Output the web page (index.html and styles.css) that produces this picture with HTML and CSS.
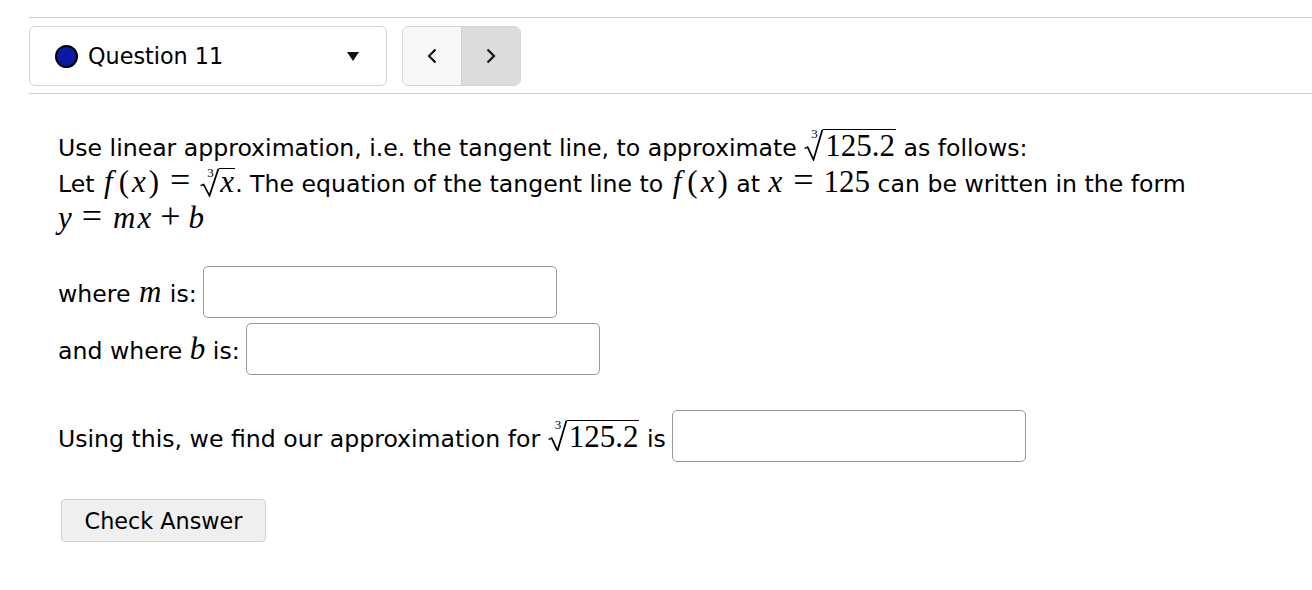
FILE: index.html
```html
<!DOCTYPE html>
<html>
<head>
<meta charset="utf-8">
<link rel="stylesheet" href="styles.css">
</head>
<body>
<div class="nav">
  <div class="qselect">
    <span class="dot"></span>
    <span class="qlabel">Question 11</span>
    <span class="caret"></span>
  </div>
  <div class="pager">
    <button class="pg prev"><svg width="12" height="18" viewBox="0 0 12 18"><path d="M9.5 2.5 L3 9 L9.5 15.5" fill="none" stroke="#111" stroke-width="2.2"/></svg></button>
    <button class="pg next"><svg width="12" height="18" viewBox="0 0 12 18"><path d="M2.5 2.5 L9 9 L2.5 15.5" fill="none" stroke="#111" stroke-width="2.2"/></svg></button>
  </div>
</div>

<div class="question">
  <p class="qtext">Use linear approximation, i.e. the tangent line, to approximate <span class="root big"><span class="idx">3</span><svg class="rad" viewBox="0 0 16 34" preserveAspectRatio="none"><path d="M0.5 21 L3 19.5 L8 33 L15.5 0.8" fill="none" stroke="#000" stroke-width="1.5"/></svg><span class="radicand mn">125.2</span></span> as follows:<br>Let <span class="math"><span class="mi f">f</span><span class="mn lp">(</span><span class="mi x">x</span><span class="mn rp">)</span><span class="mo">=</span><span class="root small"><span class="idx">3</span><svg class="rad" viewBox="0 0 16 34" preserveAspectRatio="none"><path d="M0.5 21 L3 19.5 L8 33 L15.5 0.8" fill="none" stroke="#000" stroke-width="1.5"/></svg><span class="radicand mi x">x</span></span></span>. The equation of the tangent line to <span class="math"><span class="mi f">f</span><span class="mn lp">(</span><span class="mi x">x</span><span class="mn rp">)</span></span> at <span class="math"><span class="mi x">x</span><span class="mo">=</span><span class="mn">125</span></span> can be written in the form <span class="math"><span class="mi">y</span><span class="mo">=</span><span class="mi m">m</span><span class="mi x">x</span><span class="mo bin">+</span><span class="mi">b</span></span></p>

  <div class="row first"><span>where <span class="mi m">m</span> is:</span><input class="ans" type="text"></div>
  <div class="row"><span>and where <span class="mi">b</span> is:</span><input class="ans" type="text"></div>
  <div class="row third"><span>Using this, we find our approximation for <span class="root big"><span class="idx">3</span><svg class="rad" viewBox="0 0 16 34" preserveAspectRatio="none"><path d="M0.5 21 L3 19.5 L8 33 L15.5 0.8" fill="none" stroke="#000" stroke-width="1.5"/></svg><span class="radicand mn">125.2</span></span> is</span><input class="ans" type="text"></div>

  <button class="check">Check Answer</button>
</div>
</body>
</html>
```
FILE: styles.css
```css
html, body {
  margin: 0;
  padding: 0;
  background: #fff;
}
body {
  font-family: "DejaVu Sans", "Open Sans", sans-serif;
  color: #000;
  width: 1312px;
  overflow: hidden;
}
.nav {
  margin: 17px 0 0 29px;
  border-top: 1px solid #d0d0d0;
  border-bottom: 1px solid #d0d0d0;
  padding: 8px 0 7px;
  display: flex;
  gap: 15px;
}
.qselect {
  box-sizing: border-box;
  width: 358px;
  height: 60px;
  border: 1px solid #d4d4d4;
  border-radius: 6px;
  display: flex;
  align-items: center;
  padding-left: 25px;
  padding-right: 27px;
}
.dot {
  box-sizing: border-box;
  width: 23px;
  height: 23px;
  border-radius: 50%;
  background: #0a1aa5;
  border: 2px solid #000;
  flex: none;
}
.qlabel {
  font-size: 22.3px;
  margin-left: 10px;
  flex: 1;
}
.caret {
  width: 0;
  height: 0;
  border-left: 6.5px solid transparent;
  border-right: 6.5px solid transparent;
  border-top: 9px solid #111;
}
.pager {
  box-sizing: border-box;
  width: 119px;
  height: 60px;
  border: 1px solid #d4d4d4;
  border-radius: 6px;
  display: flex;
  overflow: hidden;
}
.pg {
  border: 0;
  margin: 0;
  padding: 0;
  height: 100%;
  display: flex;
  align-items: center;
  justify-content: center;
}
.prev {
  width: 59px;
  background: #f7f7f7;
  border-right: 1px solid #d0d0d0;
}
.next {
  flex: 1;
  background: #dcdcdc;
}
.question {
  padding-left: 58px;
  font-size: 23.6px;
}
.qtext {
  margin: 35px 0 0;
  line-height: 35px;
  width: 1220px;
}
.math {
  white-space: nowrap;
}
.mi {
  font-family: "Liberation Serif", "DejaVu Serif", serif;
  font-style: italic;
  font-size: 31px;
  line-height: 1;
}
.mn, .mo {
  font-family: "Liberation Serif", "DejaVu Serif", serif;
  font-size: 31px;
  line-height: 1;
}
.mi.f {
  padding: 0 5px 0 2px;
}
.mi.x {
  padding: 0 1px;
}
.mi.m {
  padding: 0 1px;
}
.mn.lp {
  padding: 0 2px 0 1px;
}
.mn.rp {
  padding: 0 1px 0 2px;
}
.mo {
  padding: 0 10px;
  font-size: 36px;
  line-height: 0;
}
.mo.bin {
  padding: 0 8px;
}
.root {
  position: relative;
  display: inline-block;
  padding-left: 19px;
  line-height: 1;
}
.root .rad {
  position: absolute;
  left: 0;
  top: 0;
  width: 19px;
  height: 100%;
}
.root .idx {
  position: absolute;
  left: 7px;
  top: -2px;
  font-family: "Liberation Serif", serif;
  font-style: normal;
  font-size: 13px;
}
.radicand {
  display: inline-block;
  border-top: 1.6px solid #000;
  padding: 2px 1px 0 2px;
  line-height: 28px;
}
.root.small .radicand {
  line-height: 24px;
  padding-top: 1px;
}
.row {
  display: flex;
  align-items: center;
  gap: 6px;
  margin-top: 5px;
}
.row.first {
  margin-top: 28px;
}
.row.third {
  margin-top: 35px;
}
.ans {
  box-sizing: border-box;
  width: 354px;
  height: 52px;
  border: 1px solid #999;
  border-radius: 5px;
  margin: 0;
  background: #fff;
}
.check {
  margin: 37px 0 0 3px;
  box-sizing: border-box;
  width: 205px;
  height: 43px;
  background: #efefef;
  border: 1px solid #d0d0d0;
  border-radius: 4px;
  font-family: "DejaVu Sans", "Open Sans", sans-serif;
  font-size: 22.3px;
  color: #000;
  padding: 0;
}
```
